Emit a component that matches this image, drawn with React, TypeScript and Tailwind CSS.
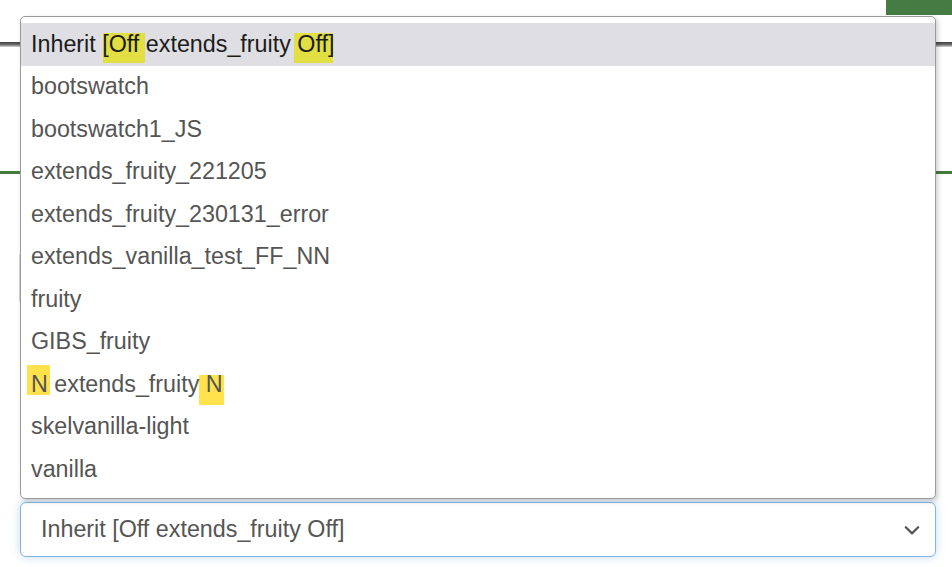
const OPTIONS = [
  "bootswatch",
  "bootswatch1_JS",
  "extends_fruity_221205",
  "extends_fruity_230131_error",
  "extends_vanilla_test_FF_NN",
  "fruity",
  "GIBS_fruity",
];

function Mark({ className }: { className: string }) {
  return <span className={"absolute h-[30px] " + className} />;
}

export default function App() {
  return (
    <div className="relative w-[952px] h-[567px] overflow-hidden bg-white font-['Liberation_Sans',Arial,sans-serif]">
      {/* page behind the open list */}
      <div className="h-[42px] flex justify-end">
        <div className="w-[66px] h-[15px] bg-[#447c44]" />
      </div>
      <div className="h-[5px] bg-gradient-to-b from-[#3f3f3f] via-[#6a6a6a] to-[#d6d6d6]" />
      <div className="mt-[124px] h-[3px] bg-[#467b3e]" />
      <div className="mt-[78px] mx-[19px] h-[52px] rounded-[4px] border border-[#d4d4d4]" />

      <div className="mt-[198px] ml-[20px] w-[916px] h-[55px] rounded-[6px] border border-[#80b3e6] bg-white shadow-[0_0_10px_rgba(90,150,230,0.35)] flex items-center justify-between pl-[20px] pr-[14px]">
        <span className="text-[23.3px] text-[#555555]">Inherit [Off extends_fruity Off]</span>
        <svg width="18" height="18" viewBox="0 0 16 16" fill="none" stroke="#555" strokeWidth="2" strokeLinecap="round" strokeLinejoin="round">
          <path d="M2.5 5.5l5.5 5.5 5.5-5.5" />
        </svg>
      </div>

      {/* open option list */}
      <div className="absolute left-[20px] top-[16px] w-[916px] h-[483px] rounded-[5px] border border-[#9b9b9b] bg-white shadow-[2px_2px_5px_rgba(0,0,0,0.2)] pt-[6px] text-[23.3px] text-[#555555]">
        <div className="relative h-[42.5px] flex items-center pl-[10px] bg-[#dedee3] text-[#1c1c1c]">
          <Mark className="left-[82px] top-[10px] w-[42px] bg-[#e1df42]" />
          <Mark className="left-[273px] top-[10px] w-[39px] bg-[#e1df42]" />
          <span className="relative">Inherit [Off extends_fruity Off]</span>
        </div>
        {OPTIONS.map((o) => (
          <div key={o} className="h-[42.5px] flex items-center pl-[10px]">
            {o}
          </div>
        ))}
        <div className="relative h-[42.5px] flex items-center pl-[10px]">
          <Mark className="left-[6px] top-[2px] w-[23px] bg-[#ffe24c]" />
          <Mark className="left-[178px] top-[12px] w-[25px] bg-[#ffe24c]" />
          <span className="relative">N extends_fruity N</span>
        </div>
        <div className="h-[42.5px] flex items-center pl-[10px]">skelvanilla-light</div>
        <div className="h-[42.5px] flex items-center pl-[10px]">vanilla</div>
      </div>
    </div>
  );
}
